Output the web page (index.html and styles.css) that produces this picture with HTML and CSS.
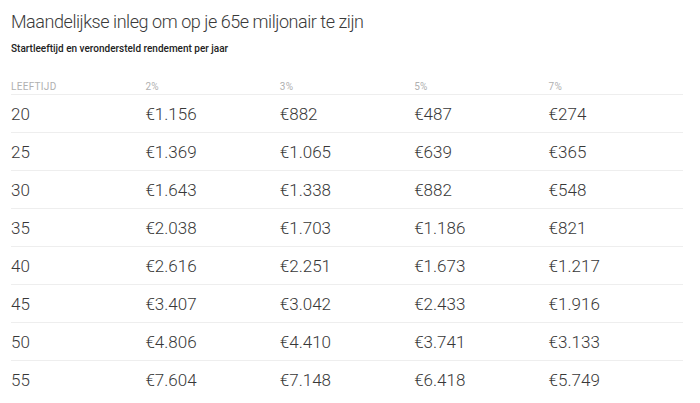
FILE: index.html
```html
<!DOCTYPE html>
<html lang="nl">
<head>
<meta charset="utf-8">
<link rel="stylesheet" href="styles.css">
</head>
<body>
<div class="page">
  <h1 class="title">Maandelijkse inleg om op je 65e miljonair te zijn</h1>
  <p class="subtitle">Startleeftijd en verondersteld rendement per jaar</p>
  <div class="table">
    <div class="row head"><span>LEEFTIJD</span><span>2%</span><span>3%</span><span>5%</span><span>7%</span></div>
    <div class="row"><span>20</span><span>€1.156</span><span>€882</span><span>€487</span><span>€274</span></div>
    <div class="row"><span>25</span><span>€1.369</span><span>€1.065</span><span>€639</span><span>€365</span></div>
    <div class="row"><span>30</span><span>€1.643</span><span>€1.338</span><span>€882</span><span>€548</span></div>
    <div class="row"><span>35</span><span>€2.038</span><span>€1.703</span><span>€1.186</span><span>€821</span></div>
    <div class="row"><span>40</span><span>€2.616</span><span>€2.251</span><span>€1.673</span><span>€1.217</span></div>
    <div class="row"><span>45</span><span>€3.407</span><span>€3.042</span><span>€2.433</span><span>€1.916</span></div>
    <div class="row"><span>50</span><span>€4.806</span><span>€4.410</span><span>€3.741</span><span>€3.133</span></div>
    <div class="row last"><span>55</span><span>€7.604</span><span>€7.148</span><span>€6.418</span><span>€5.749</span></div>
  </div>
</div>
</body>
</html>
```
FILE: styles.css
```css
html, body {
  margin: 0;
  padding: 0;
  background: #fff;
}
.page {
  padding: 10px 11px 0 11px;
  font-family: "Roboto", "Liberation Sans", sans-serif;
  color: #333;
}
.title {
  margin: 0;
  font-size: 18px;
  font-weight: 300;
  line-height: 24px;
  letter-spacing: -0.45px;
  color: #3a3a3a;
}
.subtitle {
  margin: 9px 0 0 0;
  font-size: 10px;
  line-height: 12px;
  font-weight: 500;
  color: #222;
}
.table {
  margin-top: 24px;
  width: 672px;
}
.row {
  display: grid;
  grid-template-columns: repeat(5, 1fr);
  height: 37px;
  align-items: center;
  border-bottom: 1px solid #eeeeee;
  font-size: 17px;
  font-weight: 300;
  color: #383838;
}
.row.head {
  height: 15px;
  font-size: 10px;
  font-weight: 400;
  letter-spacing: 0.3px;
  color: #b0b0b0;
}
.row.last {
  border-bottom: none;
}
```
